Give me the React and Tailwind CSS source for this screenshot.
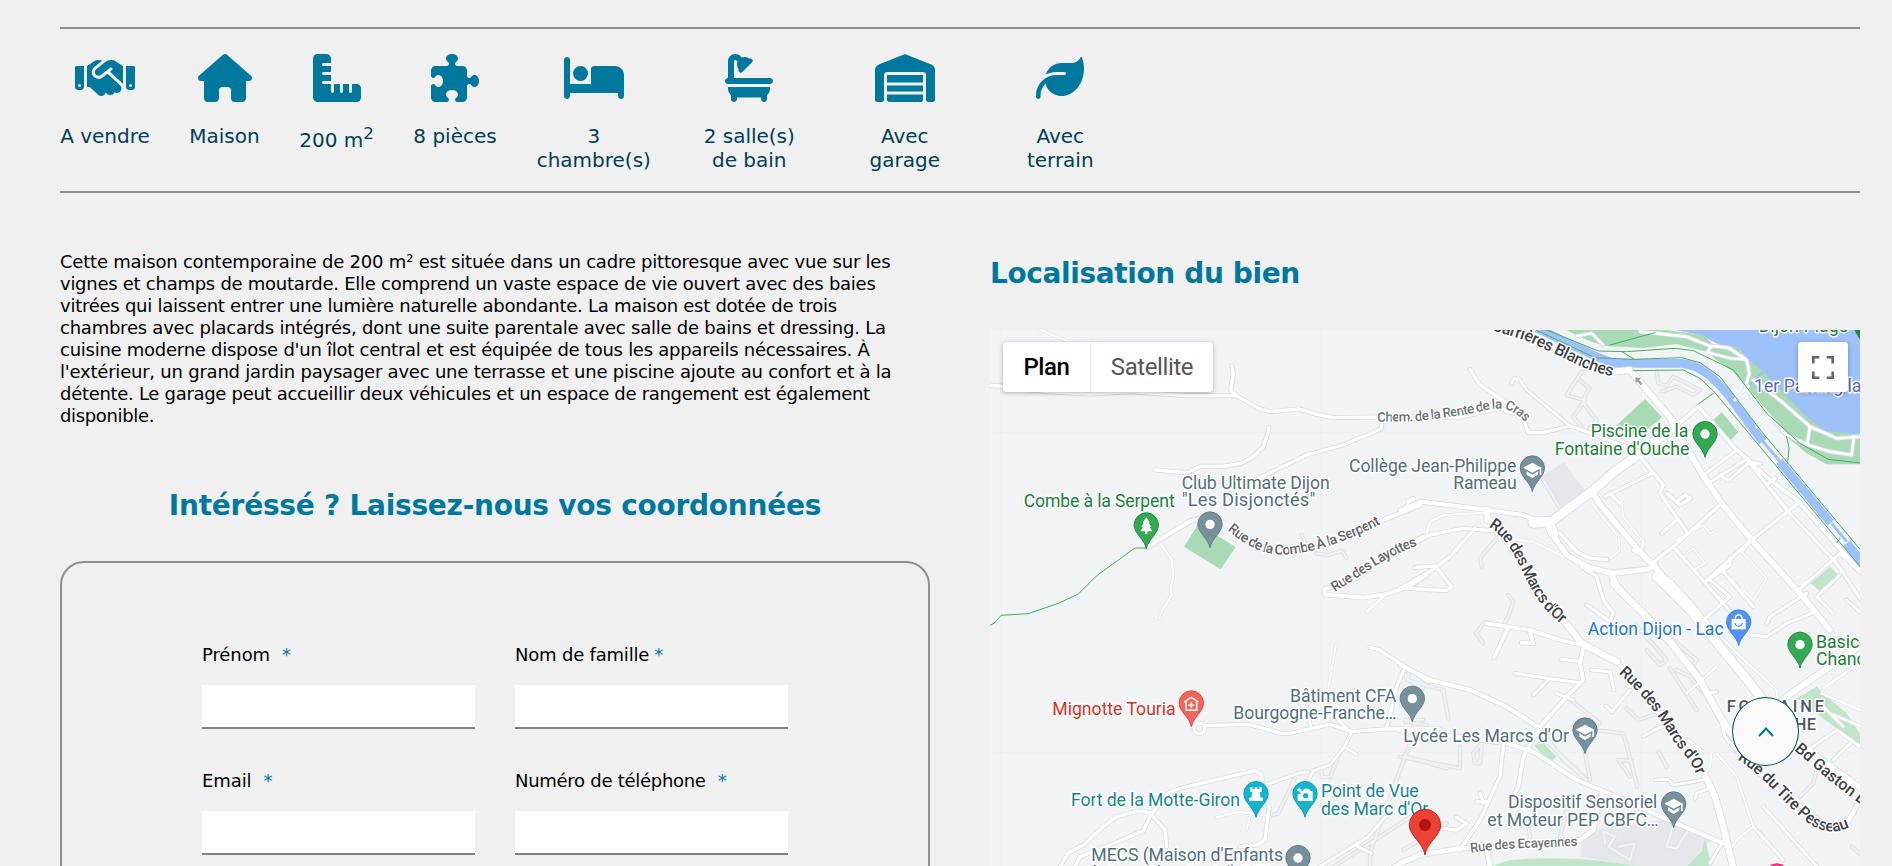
import React from "react";
import { FaHandshake, FaHouse, FaRulerCombined, FaPuzzlePiece, FaBed, FaBath, FaWarehouse, FaLeaf } from "react-icons/fa6";

const features = [
  { icon: FaHandshake, label: "A vendre", width: "w-[90px]", iconWidth: "w-[60px]", wrap: "whitespace-nowrap" },
  { icon: FaHouse, label: "Maison", width: "w-[69px]", iconWidth: "w-[54px]", wrap: "whitespace-nowrap" },
  { icon: FaRulerCombined, label: "200 m", sup: "2", width: "w-[75px]", iconWidth: "w-12", wrap: "whitespace-nowrap" },
  { icon: FaPuzzlePiece, label: "8 pièces", width: "w-[82px]", iconWidth: "w-12", wrap: "whitespace-nowrap" },
  { icon: FaBed, label: "3 chambre(s)", width: "w-[115.5px]", iconWidth: "w-[60px]", wrap: "px-2" },
  { icon: FaBath, label: "2 salle(s) de bain", width: "w-[115.5px]", iconWidth: "w-12", wrap: "px-2" },
  { icon: FaWarehouse, label: "Avec garage", width: "w-[115.5px]", iconWidth: "w-[60px]", wrap: "px-2" },
  { icon: FaLeaf, label: "Avec terrain", width: "w-[115.5px]", iconWidth: "w-12", wrap: "px-2" },
];

function Feature({ icon: Icon, label, sup, width, iconWidth, wrap }) {
  return (
    <li className={`flex flex-col items-center ${width}`}>
      <Icon className={`h-12 shrink-0 text-[#00789e] ${iconWidth}`} />
      <span className={`-mx-2 block text-center text-[20px] leading-6 text-[#003f54] ${wrap} ${sup ? "mt-[26px]" : "mt-[22px]"}`}>
        {label}
        {sup && <sup className="top-[-8px] text-[16.67px] leading-none">{sup}</sup>}
      </span>
    </li>
  );
}

const description = [
  ["tracking-[-0.21px]", "Cette maison contemporaine de 200 m² est située dans un cadre pittoresque avec vue sur les"],
  ["tracking-[-0.265px]", "vignes et champs de moutarde. Elle comprend un vaste espace de vie ouvert avec des baies"],
  ["tracking-[-0.26px]", "vitrées qui laissent entrer une lumière naturelle abondante. La maison est dotée de trois"],
  ["tracking-[-0.235px]", "chambres avec placards intégrés, dont une suite parentale avec salle de bains et dressing. La"],
  ["tracking-[-0.26px]", "cuisine moderne dispose d'un îlot central et est équipée de tous les appareils nécessaires. À"],
  ["tracking-[-0.22px]", "l'extérieur, un grand jardin paysager avec une terrasse et une piscine ajoute au confort et à la"],
  ["tracking-[-0.3px]", "détente. Le garage peut accueillir deux véhicules et un espace de rangement est également"],
  ["tracking-[-0.35px]", "disponible."],
];

function Field({ label, star = "ml-3", tracking = "tracking-[-0.1px]" }) {
  return (
    <label className="block">
      <span className={`block whitespace-pre pt-px text-[18px] leading-[22px] text-black ${tracking}`}>
        {label}
        <span className={`text-[#00789e] ${star}`}>*</span>
      </span>
      <input className="mt-[19px] block h-11 w-full border-b-2 border-[#808080] bg-white outline-none" />
    </label>
  );
}

/* Map geometry: three units per pixel, in four quadrants */
const ORIGIN = { A: [0, 0], B: [1260, 0], C: [0, 780], D: [1260, 780] };

const areas = [
  ["A", "#a8dab5", "M655 612L767 681L722 748L612 680Z"],
  ["B", "#9ec1fb", "M780 20L900 45L960 75L1020 90L1060 140L1130 220L1190 290L1250 330L1310 350L1390 340V20Z"],
  ["B", "#a8dab5", "M490 26L560 60L615 78L730 84L830 72L920 95L950 120L1000 155L1050 210L1100 280L1160 350L1220 400L1280 433L1385 433V345L1275 332L1220 290L1170 240L1090 155L1040 115L1010 80L940 75L910 45L740 22Z"],
  ["B", "#1e8e3e", "M1362 28H1390V78Z"],
  ["B", "#a8dab5", "M735 237L786 292L740 330L700 345L648 318Z"],
  ["B", "#a8dab5", "M965 277L1015 337L993 360L940 300Z"],
  ["B", "#c1e5cb", "M1290 740L1315 765L1258 812L1232 790Z"],
  ["B", "#e6e7eb", "M492 427L556 515L480 562L425 470Z"],
  ["D", "#c1e5cb", "M1250 320L1275 345L1340 400L1385 470V505L1290 430L1190 355Z"],
  ["D", "#c1e5cb", "M400 495L430 490L470 530L450 545Z"],
  ["D", "#e6e7eb", "M545 770L620 740L790 720L930 780L860 860H700L540 830Z"],
  ["D", "#c1e5cb", "M270 860L330 840Q480 828 600 842L720 860Z"],
  ["D", "#c1e5cb", "M915 775L935 860H860L905 812Z"],
];

const canal = [
  [26, "M410 24L590 110L640 130L845 130C900 135 940 170 985 225L1088 365"],
  [9, "M1085 360L1140 425"],
  [26, "M1138 424L1292 608"],
  [9, "M1295 610L1340 665"],
  [28, "M1340 670L1395 738"],
  [7, "M1090 155L1005 240"],
];

const faintRoads = [
  ["A", 9, "M835 478L760 487L710 485L625 460"],
  ["A", 10, "M965 645L980 680M1010 700L1045 705L1085 692L1100 713"],
  ["B", 10, "M545 155L500 225L550 240L568 205L540 180M555 240L520 290L545 320M550 250L590 300L565 330"],
  ["B", 9, "M770 152L775 190L800 197L820 170L900 210L880 225L830 200L785 215"],
  ["B", 10, "M290 655L240 715L245 740M430 480L480 565"],
  ["C", 10, "M945 595L895 700L870 708M1025 570V590L1050 592L1078 525M1285 275V300L1330 325M1275 420H1330"],
  ["C", 10, "M1290 490L1205 720L1170 820V860M1280 530L1400 565M1340 680L1060 860M1400 730L1270 810"],
  ["D", 10, "M250 190L228 160L255 125L300 138M325 45L340 65L325 110L310 135"],
  ["D", 10, "M740 210L780 255L800 240L735 165L705 135M810 265L890 390M830 270L870 290L910 340M760 130L890 240L880 255"],
  ["D", 10, "M600 452L670 460L712 620M695 543L655 540L690 590M680 385L715 420L790 395"],
  ["D", 10, "M10 265L20 300L130 330L145 415M15 425L80 435M0 530L180 565V500M245 490L220 520L225 550L240 550Z"],
  ["D", 10, "M420 445L490 540L560 600M555 520L570 600M500 350L600 430M425 470L550 590"],
  ["D", 10, "M820 740L800 800L830 805L865 750M615 790L610 755L645 770L625 800L690 840L705 790L655 800"],
  ["D", 10, "M1250 570L1240 610L1200 650M1365 700L1320 730L1280 725M1355 800L1390 830"],
  ["D", 10, "M500 690L480 770M385 740L390 770M775 515L800 560"],
];

const roads = [
  ["A", 5, "M165 22L210 42L250 58L280 70"],
  ["A", 10, "M20 195L70 199L200 215L330 222L450 215L620 227H768"],
  ["A", 10, "M755 138L760 160L752 210L768 227L835 265L870 275L958 267L1010 283L1060 293L1195 291H1440L1560 265L1600 280"],
  ["A", 10, "M1205 291V325L1170 342L1130 357L1090 375L985 403L835 475"],
  ["A", 10, "M867 322L862 345L850 380L815 413L780 431L730 439H662L620 458L525 450"],
  ["A", 12, "M500 682L630 604L665 595L740 612L830 675L890 692L1010 685L1110 650L1210 600L1320 555"],
  ["A", 8, "M1280 562L1285 540L1300 535"],
  ["A", 5, "M540 670L575 718L580 770L572 800L575 825L560 850L545 875L537 895"],
  ["A", 11, "M1330 650L1210 715L1120 780L1060 800L1032 808L1035 824L1150 833L1220 822L1285 800L1340 765"],
  ["A", 6, "M1160 875L1215 825"],
  ["B", 7, "M530 48L575 40L610 75"],
  ["B", 8, "M720 35L860 50L930 78L985 83L1040 120L1048 160L1035 205L1110 290L1160 345L1225 375L1290 395L1355 405L1362 350"],
  ["B", 6, "M935 80L920 97L990 115L1035 118M1045 200L1005 240M1105 288L1070 320"],
  ["B", 8, "M1060 180L1145 245L1230 320L1222 370M1230 320L1310 355L1385 350"],
  ["B", 12, "M0 572L65 545L265 570L370 585L420 605"],
  ["B", 6, "M20 572L25 545L42 540"],
  ["B", 10, "M210 148L240 195L300 235L360 270L385 338H430L510 318L560 335L650 370L720 395"],
  ["B", 8, "M335 190L342 175L358 178L380 210L510 318"],
  ["B", 5, "M80 640L90 605L130 585L260 578M275 625L300 655L400 665L490 710"],
  ["B", 10, "M0 690L90 645L190 625L275 632M225 625L150 710L105 745L0 805M45 742L105 738L155 800L140 812L20 805"],
  ["B", 11, "M820 325L895 260L1000 380L1110 480L1190 540L1390 765"],
  ["B", 9, "M1010 390L905 470M1045 415L925 490M960 465L985 482L1050 425L1080 432M1045 425L1165 575L1310 730L1390 850"],
  ["B", 10, "M1200 545L1055 660L915 785M1165 575L1100 495L1125 475M960 555L820 680L755 730"],
  ["B", 10, "M720 410L790 495L780 520L860 635M830 600L785 640M800 520L840 555L872 535L855 525L830 545"],
  ["B", 10, "M820 680L1000 885M915 785L990 735V715M970 755L1060 860M1030 690L1050 660"],
  ["B", 9, "M755 460L615 530M660 550L630 520M1320 700L1190 815M1390 765L1320 700M1320 765L1250 830L1300 880"],
  ["B", 4, "M665 545L670 590L730 665L725 690M830 660L910 615L930 640L950 630M860 700L880 685L915 730L880 750M1020 690L1100 775L1060 840L1030 810M575 550L655 650L660 690L630 715"],
  ["B", 10, "M480 640L530 695L570 715L620 718M700 690L715 700"],
  ["B", 10, "M545 740L590 770L610 840L640 880L630 905L560 855M805 775L900 880"],
  ["B", 18, "M640 155L690 150L825 310"],
  ["B", 26, "M820 322L720 400L650 450L578 512L460 600"],
  ["B", 17, "M815 305L905 460L965 550L1055 660L1200 820L1290 930"],
  ["B", 17, "M578 520L610 565L715 690L765 740L880 885"],
  ["B", 30, "M400 608L445 605L460 640"],
  ["B", 16, "M450 620L465 655L500 705L560 740L635 760L740 748L765 735"],
  ["B", 18, "M262 570V600"],
  ["B", 13, "M262 590L330 680L370 740L440 840L545 970"],
  ["B", 18, "M635 765L655 810L720 870"],
  ["C", 10, "M675 437L805 433L905 460H930L1050 433L1115 455L1220 447H1380"],
  ["C", 8, "M980 380L992 438M1068 415L1115 458L1090 505L1050 555L1000 572L985 600M1100 505L1128 522"],
  ["C", 9, "M985 575L955 580L865 612L845 620"],
  ["C", 10, "M565 640L600 625L825 572L845 585L850 640L868 680L855 780L830 795L780 800M565 640L515 700L490 752L390 795L300 830L285 860M515 700L480 692L410 710L370 740L310 795L265 818L238 865M515 705L555 750L560 800"],
  ["C", 5, "M1068 195L1040 350M710 712L775 695L860 708M815 690L800 750"],
  ["C", 10, "M1170 203L1195 208L1275 260L1345 305M1275 262L1250 320L1220 445"],
  ["C", 9, "M1225 700L1165 770L1125 795L1010 865M1125 795L1175 820M1320 820L1240 860"],
  ["D", 12, "M0 255L90 300L210 330L320 380L420 445"],
  ["D", 12, "M0 450L170 470L320 490L400 515L530 600L650 650L760 700L830 730L970 790"],
  ["D", 11, "M260 130L390 150L480 180L545 195M325 140L283 232M390 155L400 190L365 188"],
  ["D", 11, "M550 205L540 250L550 300L500 350L420 440L370 530L355 620L340 650"],
  ["D", 9, "M345 280L440 295L540 308M445 300L400 345M485 238L540 245M575 270L630 275L642 330M690 330L635 395L618 378M470 340L520 360M730 468L805 430"],
  ["D", 10, "M310 500L300 590L240 720L180 810M240 640L250 670M230 665H260M130 745L170 750L200 730L170 712"],
  ["D", 14, "M0 850L60 825L180 805L260 800L540 780L580 750L605 640M260 800L270 860"],
  ["D", 8, "M765 600L805 598L820 615L910 600M885 655L890 640L930 625M980 765L930 850"],
  ["D", 5, "M935 515L930 560L920 575M950 520L1010 590L1060 740M1060 740L1010 780L990 810M880 80L1000 210L1130 330V350M910 515L800 430M1215 5L1200 30M860 340L950 260"],
  ["D", 9, "M870 95L905 125L990 50L930 0M1055 165L1100 170L1160 130L1235 100M1100 130L1110 110L1220 40M1340 60L1390 105M920 340L950 335"],
  ["D", 9, "M965 430L975 470L1050 560L1160 650L1260 720M1060 740L1150 840M1090 680L1260 870M1210 520L1310 450L1380 500M1300 540L1350 490"],
  ["D", 6, "M1265 340L1390 395M1270 325L1390 240M1290 400L1385 440M1260 370L1330 440"],
  ["D", 20, "M640 10L720 90L810 185L900 300L960 410L1000 470"],
  ["D", 26, "M770 -10L870 90L1050 310L1180 480"],
  ["D", 18, "M1180 480L1390 630M1100 400L1180 335L1390 190"],
  ["D", 13, "M1380 660L1335 740"],
  ["D", 19, "M480 105L545 190L650 245"],
  ["D", 11, "M650 245L760 380L860 510L915 590"],
  ["D", 19, "M915 585L945 650L970 740L1000 865"],
];

const trails = [
  ["A", "M499 684H465L350 767L295 822L235 850L145 881L63 886L45 908L30 916"],
  ["B", "M430 26L595 93L680 95L825 85L880 92L1000 150L1100 280L1200 370L1285 418L1390 430"],
  ["B", "M408 30L585 113L700 118L845 113L900 128L960 170L1085 335L1390 700"],
  ["B", "M700 152L850 150L900 175L945 218L1390 752"],
  ["B", "M895 252L940 220M1160 350L1167 385L1163 430M630 75L765 38M665 95L703 118M1320 655L1310 668"],
];

const move = (q) => `translate(${ORIGIN[q][0]} ${ORIGIN[q][1]})`;

function Place({ x, y, w, color, anchor = "start", size = 53, children }) {
  return (
    <text x={x} y={y} fontSize={size} fill={color} textAnchor={anchor} textLength={w} stroke="#fff" strokeWidth="9" strokeLinejoin="round" paintOrder="stroke">
      {children}
    </text>
  );
}

function Street({ id, d, size = 42, color = "#5f6368", w, weight = 500, children }) {
  return (
    <>
      <path id={id} d={d} fill="none" />
      <text fontSize={size} fontWeight={weight} fill={color} stroke="#fff" strokeWidth="8" strokeLinejoin="round" paintOrder="stroke">
        <textPath href={`#${id}`} textLength={w}>{children}</textPath>
      </text>
    </>
  );
}

function Pin({ x, y, fill, edge, children }) {
  return (
    <g transform={`translate(${x} ${y})`}>
      <path d="M0 0C-5 -28 -36 -44 -36.5 -71A36.5 36.5 0 0 1 36.5 -71C36 -44 5 -28 0 0Z" fill={fill} stroke={edge} strokeWidth="3" />
      {children || <circle cy="-70" r="14" fill="#fff" />}
    </g>
  );
}

const School = () => (
  <g fill="#fff">
    <path d="M-28 -72L0 -87L28 -72L0 -57Z" />
    <path d="M-17 -61V-51L0 -41L17 -51V-61L0 -51ZM22 -72H27V-50H22Z" />
  </g>
);

function CityMap() {
  const slate = "#546e7a";
  return (
    <svg className="block h-full w-full" viewBox="30 30 2610 1608" fontFamily="Roboto, sans-serif" preserveAspectRatio="none">
      <rect x="30" y="30" width="2610" height="1608" fill="#f1f3f5" />
      <path d="M64 30V1640M1024 30V1640M1984 30V1640M30 337H2640M30 1297H2640" stroke="#eceef0" strokeWidth="3" />
      {areas.map(([q, c, d]) => <path key={d} transform={move(q)} d={d} fill={c} />)}
      <g transform={move("B")} fill="none" stroke="#9ec1fb">
        {canal.map(([w, d]) => <path key={d} d={d} strokeWidth={w} />)}
      </g>
      <g fill="none" strokeLinecap="round" strokeLinejoin="round">
        {faintRoads.map(([q, w, d]) => <path key={d} transform={move(q)} d={d} stroke="#dfe1e5" strokeWidth={w + 3} />)}
        {faintRoads.map(([q, w, d]) => <path key={d} transform={move(q)} d={d} stroke="#f0f1f3" strokeWidth={w - 3} />)}
        {roads.map(([q, w, d]) => <path key={d} transform={move(q)} d={d} stroke={w < 7 ? "#e6e8ea" : "#dadce1"} strokeWidth={w + 5} />)}
        <circle cx="658" cy="1225" r="16" stroke="#dadce1" strokeWidth="15" />
        {roads.map(([q, w, d]) => <path key={d} transform={move(q)} d={d} stroke="#fff" strokeWidth={w} />)}
        <circle cx="658" cy="1225" r="16" stroke="#fff" strokeWidth="10" />
        {trails.map(([q, d]) => <path key={d} transform={move(q)} d={d} stroke="#46ae62" strokeWidth="3" />)}
      </g>
      <path d="M1966 172L1982 174L1978 180L1988 192L1982 196L1972 185L1967 189Z" fill="#9aa0a6" />

      <Street id="carrieres" d="M1534 30L1640 62L1760 118C1810 145 1850 160 1925 175" size={49} color="#3c4043" w={390}>Carrières Blanches</Street>
      <Street id="rente" d="M1192 305L1300 304C1380 296 1460 285 1520 270C1580 255 1610 278 1650 320" size={40} color="#6b7075" w={460}>Chem. de la Rente de la Cras</Street>
      <Street id="combe" d="M742 630C800 680 850 704 910 704C1010 700 1120 655 1215 605" size={42} w={496}>Rue de la Combe À la Serpent</Street>
      <Street id="layottes" d="M1064 816L1180 742Q1240 702 1320 674" size={42} w={286}>Rue des Layottes</Street>
      <Street id="marcs1" d="M1525 620C1580 650 1605 710 1640 780C1670 840 1700 880 1755 920" size={48} color="#3c4043" w={370}>Rue des Marcs d'Or</Street>
      <Street id="marcs2" d="M1915 1060C1985 1120 2035 1185 2075 1255C2105 1300 2132 1315 2150 1366" size={48} color="#3c4043" w={388}>Rue des Marcs d'Or</Street>
      <Street id="tire" d="M2272 1318C2340 1360 2400 1435 2455 1484C2510 1536 2560 1552 2625 1512" size={48} color="#3c4043" w={418}>Rue du Tire Pesseau</Street>
      <Street id="gaston" d="M2442 1290L2540 1375L2690 1490" size={48} color="#3c4043">Bd Gaston Bachelard</Street>
      <Street id="ecayennes" d="M1472 1598C1580 1582 1680 1584 1800 1576" size={40} color="#6b7075" w={322}>Rue des Ecayennes</Street>

      <g fontWeight="500">
        <Place x={2240} y={1176} w={292} size={49} color="#54575c">FONTAINE</Place>
        <Place x={2508} y={1229} w={210} size={49} anchor="end" color="#54575c">D'OUCHE</Place>
      </g>
      <Place x={2336} y={36} w={268} color="#188038">Dijon Plage</Place>
      <Place x={2322} y={216} color="#5a67c8">1er Parking lac</Place>
      <Place x={131} y={562} w={453} color="#188038">Combe à la Serpent</Place>
      <Place x={605} y={506} w={444} color={slate}>Club Ultimate Dijon</Place>
      <Place x={605} y={558} w={401} size={55} color={slate}>"Les Disjonctés"</Place>
      <Place x={1107} y={455} w={502} color={slate}>Collège Jean-Philippe</Place>
      <Place x={1420} y={507} w={190} color={slate}>Rameau</Place>
      <Place x={1832} y={351} w={293} color="#188038">Piscine de la</Place>
      <Place x={1724} y={404} w={404} color="#188038">Fontaine d'Ouche</Place>
      <Place x={1823} y={945} w={408} color="#1a73e8">Action Dijon - Lac</Place>
      <Place x={2508} y={984} color="#188038">Basic-Fit</Place>
      <Place x={2508} y={1036} color="#188038">Chanceliers</Place>
      <Place x={217} y={1186} w={370} color="#d93025">Mignotte Touria</Place>
      <Place x={930} y={1145} w={319} color={slate}>Bâtiment CFA</Place>
      <Place x={760} y={1198} w={490} color={slate}>Bourgogne-Franche…</Place>
      <Place x={1270} y={1266} w={497} color={slate}>Lycée Les Marcs d'Or</Place>
      <Place x={273} y={1458} w={507} color="#12858f">Fort de la Motte-Giron</Place>
      <Place x={1023} y={1432} w={293} color="#12858f">Point de Vue</Place>
      <Place x={1023} y={1485} w={322} color="#12858f">des Marc d'Or</Place>
      <Place x={334} y={1624} w={575} color={slate}>MECS (Maison d'Enfants</Place>
      <Place x={334} y={1676} w={545} color={slate}>à Caractère Social) PEP</Place>
      <Place x={1584} y={1464} w={448} color={slate}>Dispositif Sensoriel</Place>
      <Place x={1522} y={1517} w={514} color={slate}>et Moteur PEP CBFC…</Place>

      <Pin x={499} y={686} fill="#34a853" edge="#1e8e3e">
        <path d="M0 -94L11 -78H7L15 -65H10L18 -52H3V-44H-3V-52H-18L-10 -65H-15L-7 -78H-11Z" fill="#fff" />
      </Pin>
      <Pin x={690} y={683} fill="#78909c" edge="#607d8b" />
      <Pin x={1657} y={515} fill="#78909c" edge="#607d8b"><School /></Pin>
      <Pin x={2175} y={412} fill="#34a853" edge="#1e8e3e" />
      <Pin x={2276} y={977} fill="#5491f5" edge="#4285f4">
        <path d="M-21 -80H21V-49H-21Z" fill="#fff" />
        <path d="M-10 -78V-82A10 10 0 0 1 10 -82V-78" stroke="#fff" strokeWidth="4" fill="none" />
        <path d="M-11 -68C-9 -55 9 -55 11 -68" stroke="#5491f5" strokeWidth="4" fill="none" />
      </Pin>
      <Pin x={2460} y={1044} fill="#34a853" edge="#1e8e3e" />
      <Pin x={634} y={1220} fill="#ee675c" edge="#ea4335">
        <path d="M-21 -74L0 -88L21 -74M-16 -76V-49H16V-76M0 -73V-55M-9 -64H9" stroke="#fff" strokeWidth="4.5" fill="none" />
      </Pin>
      <Pin x={1297} y={1206} fill="#78909c" edge="#607d8b" />
      <Pin x={1815} y={1301} fill="#78909c" edge="#607d8b"><School /></Pin>
      <Pin x={828} y={1492} fill="#12b5cb" edge="#0fa0b4">
        <path d="M-17 -90H-10V-85H-4V-90H4V-85H10V-90H17V-76H11L14 -59H21V-49H-21V-59H-14L-11 -76H-17Z" fill="#fff" />
      </Pin>
      <Pin x={975} y={1492} fill="#12b5cb" edge="#0fa0b4">
        <path d="M-22 -70H-14V-79H-7L-2 -86H12L16 -79H23V-49H-22Z" fill="#fff" />
        <circle cx="2" cy="-65" r="8" fill="#12b5cb" />
        <path d="M-17 -89V-75M-24 -82H-10" stroke="#fff" strokeWidth="4" />
      </Pin>
      <Pin x={954} y={1684} fill="#78909c" edge="#607d8b" />
      <Pin x={2081} y={1523} fill="#78909c" edge="#607d8b"><School /></Pin>
      <Pin x={2391} y={1739} fill="#ec4b8c" edge="#e91e63" />
      <g>
        <path d="M1335 1605C1330 1568 1288 1548 1288 1515A47 47 0 0 1 1382 1515C1382 1548 1340 1568 1335 1605Z" fill="#ea4335" stroke="#c5221f" strokeWidth="3" />
        <circle cx="1335" cy="1515" r="18" fill="#b31412" />
      </g>
    </svg>
  );
}

export default function App() {
  return (
    <main className="h-[866px] overflow-hidden bg-[#f0f0f0] pl-[60px] pr-8 pt-[27px] font-[Verdana,'DejaVu_Sans',sans-serif]">
      <ul className="flex h-[166px] gap-10 border-y-2 border-[#8f8f8f] pt-[25px]">
        {features.map((f) => <Feature key={f.label} {...f} />)}
      </ul>

      <div className="grid grid-cols-2 gap-[60px]">
        <section className="pt-[58px]">
          <p className="whitespace-nowrap text-[18px] leading-[22px] text-black">
            {description.map(([tracking, line]) => <span key={line} className={`block ${tracking}`}>{line}</span>)}
          </p>
          <h2 className="mt-[62px] whitespace-nowrap text-center text-[28px] font-bold leading-[34px] tracking-[-0.25px] text-[#00789e]">
            Intéréssé ? Laissez-nous vos coordonnées
          </h2>
          <form className="mt-[38px] grid h-[420px] grid-cols-[273px_273px] content-start gap-x-10 gap-y-10 rounded-[24px] border-2 border-[#8f8f8f] px-[140px] pt-[80px]">
            <Field label="Prénom" />
            <Field label="Nom de famille" star="ml-[5px]" tracking="tracking-[-0.2px]" />
            <Field label="Email" />
            <Field label="Numéro de téléphone" tracking="tracking-[-0.28px]" />
          </form>
        </section>

        <section className="pt-[64px]">
          <h2 className="whitespace-nowrap text-[28px] font-bold leading-[34px] tracking-[-0.38px] text-[#00789e]">Localisation du bien</h2>
          <div className="relative mt-[39px] h-[536px] overflow-hidden">
            <CityMap />
            <div className="absolute left-[13px] top-3 flex h-[50px] overflow-hidden rounded-[3px] bg-white font-[Roboto,sans-serif] text-[24px] tracking-[-0.4px] shadow-[0_1px_4px_rgba(0,0,0,0.3)]">
              <button className="w-[87px] font-medium text-black">Plan</button>
              <button className="w-[123px] border-l border-[#ececec] text-[#565656]">Satellite</button>
            </div>
            <button aria-label="Plein écran" className="absolute right-3 top-3 flex size-[50px] items-center justify-center rounded-[3px] bg-white shadow-[0_1px_4px_rgba(0,0,0,0.3)]">
              <svg viewBox="0 0 22 23" className="h-[23px] w-[22px]" fill="none" stroke="#666" strokeWidth="2.6">
                <path d="M1.3 7.5V1.3H7.3M14.7 1.3H20.7V7.5M20.7 15.5V21.7H14.7M7.3 21.7H1.3V15.5" />
              </svg>
            </button>
            <button aria-label="Haut de page" className="absolute left-[742px] top-[367px] flex h-[69px] w-[67px] items-center justify-center rounded-[50%] border border-[#004f68] bg-[#faf9fa]">
              <svg viewBox="0 0 16 10" className="h-2.5 w-4" fill="none" stroke="#00789e" strokeWidth="2">
                <path d="M1 9L8 1.5L15 9" />
              </svg>
            </button>
          </div>
        </section>
      </div>
    </main>
  );
}
